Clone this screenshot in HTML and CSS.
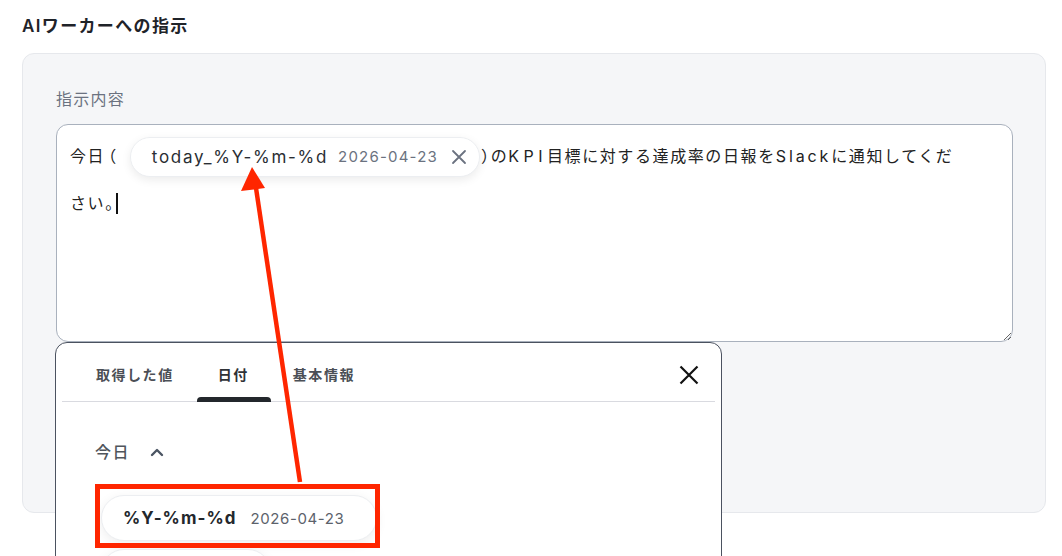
FILE: index.html
```html
<!DOCTYPE html>
<html lang="ja">
<head>
<meta charset="utf-8">
<link rel="stylesheet" href="styles.css">
</head>
<body>
<div class="page">
  <h2 class="title">AIワーカーへの指示</h2>
  <section class="box">
    <div class="label">指示内容</div>
    <div class="editor">
      <div class="line">今日<span class="lparen">（</span><span class="chip"><span class="chip-key">today_%Y-%m-%d</span><span class="chip-val">2026-04-23</span><svg class="chip-x" width="16" height="16" viewBox="0 0 16 16"><path d="M2 2L14 14M14 2L2 14" stroke="#6b7280" stroke-width="1.8" stroke-linecap="round"/></svg></span><span class="half">）</span>の<span class="latin wide">KPI</span>目標に対する達成率の日報を<span class="latin">Slack</span>に通知してくだ</div>
      <div class="line">さい<span class="half">。</span><span class="caret"></span></div>
    </div>
  </section>

  <div class="panel">
    <div class="tabs">
      <div class="tab">取得した値</div>
      <div class="tab active">日付</div>
      <div class="tab">基本情報</div>
      <svg class="close" width="20" height="20" viewBox="0 0 20 20"><path d="M1.5 1.5L18.5 18.5M18.5 1.5L1.5 18.5" stroke="#111" stroke-width="2.2"/></svg>
    </div>
    <div class="panel-body">
      <div class="group">今日<svg class="chev" width="14" height="10" viewBox="0 0 14 10"><path d="M2 8L7 3L12 8" fill="none" stroke="#4b5563" stroke-width="2.4" stroke-linecap="round" stroke-linejoin="round"/></svg></div>
      <div class="opt"><span class="opt-key">%Y-%m-%d</span><span class="opt-val">2026-04-23</span></div>
      <div class="opt opt-next"></div>
    </div>
  </div>

  <svg class="annot" width="1062" height="556" viewBox="0 0 1062 556">
    <rect x="97.5" y="486.5" width="280" height="59" fill="none" stroke="#ff2600" stroke-width="5"/>
    <line x1="300" y1="482" x2="256" y2="188" stroke="#ff2600" stroke-width="4.5"/>
    <polygon points="252,167 241,191 265,188" fill="#ff2600"/>
  </svg>
</div>
</body>
</html>
```

FILE: styles.css
```css
* { box-sizing: border-box; }
html, body { margin: 0; padding: 0; background: #fff; }
body {
  font-family: Inter, "Noto Sans CJK JP", sans-serif;
  color: #222;
  width: 1062px;
  height: 556px;
  overflow: hidden;
}
.page {
  position: relative;
  padding: 14px 16px 0 22px;
}
.title {
  margin: 0 0 15px;
  font-size: 17px;
  line-height: 24px;
  font-weight: 600;
  letter-spacing: 0.08em;
  color: #1f2329;
}
.box {
  width: 1024px;
  height: 460px;
  background: #f5f6f8;
  border: 1px solid #e6e8ec;
  border-radius: 12px;
  padding: 33px 32px 0 33px;
}
.label {
  font-size: 16px;
  line-height: 24px;
  color: #6b7280;
  letter-spacing: 0.08em;
  margin-bottom: 13px;
}
.editor {
  height: 218px;
  background: #fff;
  border: 1px solid #a9b1bd;
  border-radius: 12px;
  padding: 8px 13px;
  font-size: 16px;
  letter-spacing: 0.1em;
  color: #222;
  resize: both;
  overflow: hidden;
}
.line {
  height: 47px;
  line-height: 47px;
  white-space: nowrap;
  display: flex;
  align-items: center;
}
.lparen {
  font-feature-settings: "halt";
  margin-left: 3px;
}
.half {
  font-feature-settings: "halt";
}
.latin { letter-spacing: 0.18em; }
.latin.wide { letter-spacing: 0.28em; }
.chip {
  display: inline-flex;
  align-items: center;
  height: 40px;
  margin: 0 1px 0 12px;
  padding: 0 12px 0 21px;
  background: #fff;
  border: 1px solid #eceef1;
  border-radius: 20px;
  box-shadow: 0 3px 10px rgba(0,0,0,0.08);
  line-height: 20px;
}
.chip-key {
  font-size: 17px;
  letter-spacing: 0.1em;
  color: #2a2e33;
}
.chip-val {
  margin-left: 10px;
  font-size: 15px;
  letter-spacing: 0.08em;
  color: #6b7280;
}
.chip-x { margin-left: 13px; }
.caret {
  display: inline-block;
  width: 2px;
  height: 21px;
  margin-left: 1px;
  background: #111;
}

.panel {
  position: absolute;
  left: 55px;
  top: 342px;
  width: 667px;
  height: 260px;
  background: #fff;
  border: 1px solid #4b5260;
  border-radius: 12px 12px 0 0;
  padding: 0 6px;
}
.tabs {
  display: flex;
  align-items: flex-start;
  height: 59px;
  border-bottom: 1px solid #d9dae0;
  padding-left: 12px;
  position: relative;
}
.tab {
  padding: 22px 22px 0;
  height: 58px;
  font-size: 14px;
  line-height: 20px;
  font-weight: 600;
  letter-spacing: 0.11em;
  color: #4b4f56;
  position: relative;
}
.tab.active { color: #2f3237; }
.tab.active::after {
  content: "";
  position: absolute;
  left: 1px;
  right: 0;
  bottom: -1px;
  height: 5px;
  background: #23272c;
  border-radius: 4px 4px 0 0;
}
.close {
  margin-left: auto;
  margin-right: 16px;
  margin-top: 22px;
}
.panel-body {
  padding: 38px 0 0 33px;
}
.group {
  display: flex;
  align-items: center;
  font-size: 16px;
  line-height: 24px;
  font-weight: 500;
  letter-spacing: 0.1em;
  color: #50555c;
}
.chev { margin-left: 20px; }
.opt {
  display: flex;
  align-items: center;
  width: 276px;
  height: 46px;
  margin: 31px 0 0 6px;
  padding: 0 21px;
  background: #fff;
  border: 1px solid #eceef1;
  border-radius: 23px;
  box-shadow: 0 3px 12px rgba(0,0,0,0.07);
}
.opt-next { margin-top: 8px; width: 170px; }
.opt-key {
  font-size: 17px;
  font-weight: 700;
  letter-spacing: 0.06em;
  color: #23272c;
}
.opt-val {
  margin-left: 14px;
  font-size: 15px;
  letter-spacing: 0.04em;
  color: #5c626b;
}
.annot {
  position: absolute;
  left: 0;
  top: 0;
  pointer-events: none;
}
```
